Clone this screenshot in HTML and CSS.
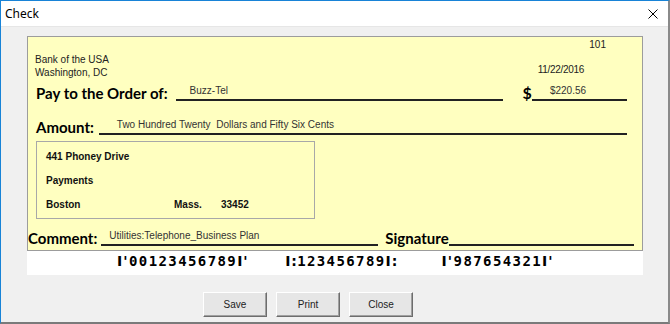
FILE: index.html
```html
<!DOCTYPE html>
<html lang="en">
<head>
    <meta charset="UTF-8">
    <title>Check</title>
    <link rel="stylesheet" href="styles.css">
</head>
<body>
    <div class="window">
        <div class="titlebar">
            <span class="title">Check</span>
            <svg class="close-icon" width="10" height="10" viewBox="0 0 10 10">
                <path d="M0.5 0.5 L9.5 9.5 M9.5 0.5 L0.5 9.5" stroke="#000" stroke-width="1" fill="none"/>
            </svg>
        </div>

        <div class="client">
            <div class="check">
                <div class="check-face">
                    <div class="check-head">
                        <div class="bank">
                            <div>Bank of the USA</div>
                            <div>Washington, DC</div>
                        </div>
                        <div class="meta">
                            <div class="check-number">101</div>
                            <div class="check-date">11/22/2016</div>
                        </div>
                    </div>

                    <div class="row pay-row">
                        <span class="label">Pay to the Order of:</span>
                        <span class="field payee">Buzz-Tel</span>
                        <span class="label dollar">$</span>
                        <span class="field amount-num">$220.56</span>
                    </div>

                    <div class="row amount-row">
                        <span class="label">Amount:</span>
                        <span class="field amount-words">Two Hundred Twenty&nbsp; Dollars and Fifty Six Cents</span>
                    </div>

                    <div class="address">
                        <div class="address-line">441 Phoney Drive</div>
                        <div class="address-line">Payments</div>
                        <div class="address-line city-line">
                            <span class="city">Boston</span>
                            <span class="state">Mass.</span>
                            <span class="zip">33452</span>
                        </div>
                    </div>

                    <div class="row comment-row">
                        <span class="label">Comment:</span>
                        <span class="field comment">Utilities:Telephone_Business Plan</span>
                        <span class="label signature-label">Signature</span>
                        <span class="field signature"></span>
                    </div>
                </div>

                <!-- MICR line: on-us / transit symbols drawn as I' and I: -->
                <div class="micr">
                    <span class="micr-group group-1"><span class="sym">I'</span>00123456789<span class="sym">I'</span></span>
                    <span class="micr-group group-2"><span class="sym">I:</span>123456789<span class="sym">I:</span></span>
                    <span class="micr-group group-3"><span class="sym">I'</span>987654321<span class="sym">I'</span></span>
                </div>
            </div>

            <div class="buttons">
                <button class="btn">Save</button>
                <button class="btn">Print</button>
                <button class="btn">Close</button>
            </div>
        </div>
    </div>
</body>
</html>
```

FILE: styles.css
```css
* {
    box-sizing: border-box;
}

body {
    margin: 0;
    font-family: "Liberation Sans", Arial, sans-serif;
    background: #f0f0f0;
}

.window {
    width: 670px;
    height: 324px;
    display: flex;
    flex-direction: column;
    border-left: 1px solid #1883d7;
    border-top: 1px solid #1883d7;
    border-right: 2px solid #8a8a8a;
    border-bottom: 2px solid #7a7a7a;
    background: #f0f0f0;
}

.titlebar {
    height: 26px;
    flex-shrink: 0;
    display: flex;
    align-items: center;
    justify-content: space-between;
    padding: 0 10px 0 4px;
    background: #fff;
    border-bottom: 1px solid #e6e6e6;
}

.title {
    font-family: "Noto Sans", sans-serif;
    font-size: 12px;
    color: #000;
}

.close-icon {
    display: block;
}

.client {
    flex: 1;
    padding: 9px 0 0 26px;
}

/* Check body */
.check {
    width: 616px;
}

.check-face {
    height: 215px;
    background: #ffffc0;
    border: 1px solid #9c9c9c;
    color: #222;
}

.check-head {
    height: 42px;
    display: flex;
    justify-content: space-between;
    font-size: 10px;
    line-height: 13px;
}

.bank {
    padding: 16px 0 0 7px;
}

.meta {
    display: flex;
    flex-direction: column;
    align-items: flex-end;
    padding-top: 1px;
}

.check-number {
    margin-right: 36px;
}

.check-date {
    margin-top: 12px;
    margin-right: 58px;
    letter-spacing: -0.3px;
}

/* Lines with labels */
.row {
    display: flex;
    align-items: flex-end;
}

.label {
    font-family: "Lato", sans-serif;
    font-weight: bold;
    font-size: 15px;
    color: #000;
    line-height: 16px;
}

.field {
    border-bottom: 2px solid #222;
    font-size: 10px;
    line-height: 12px;
    height: 16px;
    color: #333;
}

.pay-row {
    height: 22px;
    padding-left: 8px;
}

.payee {
    width: 327px;
    margin-left: 8px;
    padding-left: 14px;
}

.dollar {
    margin-left: 20px;
    font-size: 16px;
}

.amount-num {
    width: 95px;
    padding-left: 18px;
}

.amount-row {
    height: 34px;
    padding-left: 8px;
}

.amount-words {
    width: 528px;
    margin-left: 5px;
    padding-left: 18px;
}

/* Payee address box */
.address {
    width: 279px;
    height: 78px;
    margin: 6px 0 0 8px;
    border: 1px solid #a8a8a8;
    padding: 8px 0 0 9px;
    font-size: 10px;
    font-weight: bold;
    color: #111;
}

.address-line {
    height: 24px;
    line-height: 13px;
}

.city-line {
    display: flex;
}

.city {
    width: 128px;
}

.state {
    width: 47px;
}

.comment-row {
    height: 27px;
}

.comment {
    width: 277px;
    margin-left: 4px;
    padding-left: 8px;
}

.signature-label {
    margin-left: 7px;
}

.signature {
    width: 185px;
}

/* MICR line */
.micr {
    height: 24px;
    padding-bottom: 5px;
    background: #fff;
    display: flex;
    align-items: center;
    font-family: "DejaVu Sans Mono", monospace;
    font-weight: bold;
    font-size: 14px;
    letter-spacing: 1.4px;
    color: #000;
}

.micr-group {
    white-space: nowrap;
}

.sym {
    display: inline-block;
    width: 12px;
    font-family: "DejaVu Sans", sans-serif;
    letter-spacing: 1px;
}

.group-1 {
    margin-left: 90px;
}

.group-2 {
    margin-left: 36px;
}

.group-3 {
    margin-left: 44px;
}

/* Dialog buttons */
.buttons {
    display: flex;
    gap: 9px;
    margin: 17px 0 0 176px;
}

.btn {
    width: 64px;
    height: 25px;
    padding: 0;
    font-family: "Liberation Sans", Arial, sans-serif;
    font-size: 10px;
    color: #222;
    background: #e6e6e6;
    border: 1px solid;
    border-color: #fff #6d6d6d #6d6d6d #fff;
    box-shadow: inset -1px -1px 0 #a0a0a0;
}
```
